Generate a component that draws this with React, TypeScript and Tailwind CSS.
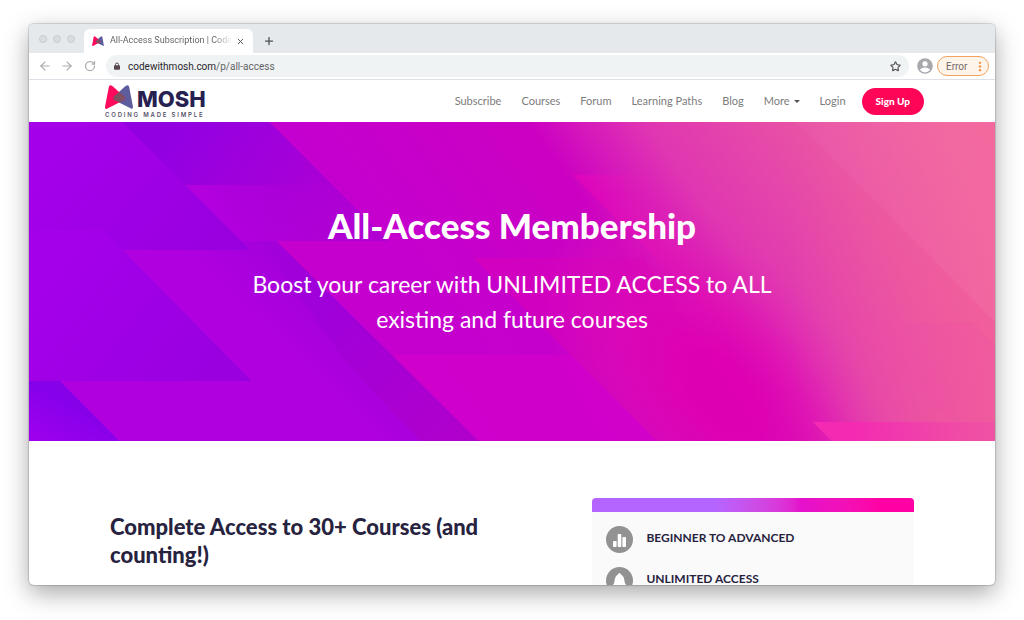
import { ReactNode } from 'react';
import {
  ArrowLeft,
  ArrowRight,
  Plus,
  RotateCw,
  Star,
  X,
} from 'lucide-react';

const navLinks = [
  { label: 'Subscribe', href: '#subscribe' },
  { label: 'Courses', href: '#courses' },
  { label: 'Forum', href: '#forum' },
  { label: 'Learning Paths', href: '#paths' },
  { label: 'Blog', href: '#blog' },
];

function LogoMark({ className }: { className?: string }) {
  return (
    <svg viewBox="0 0 28 24" className={className} aria-hidden="true">
      <path
        d="M20 1.500 Q23.500 -1 24.200 2 L28 22 Q28 24.500 26 23.500 L9 15 Q7.500 13 9 11.500 Z"
        fill="#5d5c9c"
      />
      <path
        d="M3.800 2 Q4.500 -1 8 1.500 L19 11.500 Q20.500 13.500 19 15 L2 23.700 Q0 24.500 0 22 Z"
        fill="#ff0a5c"
      />
      <path
        d="M14 7 L19 11.500 Q20.500 13.500 19 15 L14.500 17.500 L9 15 Q7.500 13 9 11.500 Z"
        fill="#7c5360"
      />
    </svg>
  );
}

function TabStrip() {
  return (
    <div className="flex h-[29px] items-end bg-[#e5e9ec]">
      <div className="flex gap-1.5 self-center pl-2.5">
        {[0, 1, 2].map((n) => (
          <span
            key={n}
            className="size-2 rounded-full border border-[#c9cccf] bg-[#dadddf]"
          />
        ))}
      </div>
      <div className="ml-[9px] flex h-6 w-[169px] items-center rounded-t-md bg-white px-2">
        <LogoMark className="h-[10px] w-3 shrink-0" />
        <span className="ml-1.5 flex-1 overflow-hidden bg-linear-to-r from-[#5a5d60] from-85% to-transparent bg-clip-text text-[9px] whitespace-nowrap text-transparent">
          All-Access Subscription | Code
        </span>
        <button type="button" aria-label="Close tab" className="ml-1">
          <X className="size-[9px] text-[#4b4e52]" strokeWidth={2.5} />
        </button>
      </div>
      <button type="button" aria-label="New tab" className="mb-1.5 ml-2.5">
        <Plus className="size-3 text-[#4b4e52]" strokeWidth={2.5} />
      </button>
    </div>
  );
}

function Toolbar() {
  return (
    <div className="flex h-[27px] items-center border-b border-[#dfe1e8] pr-1.5 pl-[9px]">
      <div className="flex items-center gap-2 text-[#a9abae]">
        <button type="button" aria-label="Back">
          <ArrowLeft className="size-3.5" strokeWidth={2} />
        </button>
        <button type="button" aria-label="Forward">
          <ArrowRight className="size-3.5" strokeWidth={2} />
        </button>
        <button type="button" aria-label="Reload" className="pl-0.5">
          <RotateCw className="size-3" strokeWidth={2.5} />
        </button>
      </div>
      <div className="ml-2.5 flex h-[22px] flex-1 items-center rounded-full bg-[#f0f3f4] pr-2 pl-2">
        <svg viewBox="0 0 8 10" className="h-2 w-1.5" aria-hidden="true">
          <rect y="4" width="8" height="6" rx="1" fill="#55464b" />
          <path
            d="M2 4.500 V3 a2 2 0 0 1 4 0 V4.500"
            fill="none"
            stroke="#55464b"
            strokeWidth="1.300"
          />
        </svg>
        <span className="ml-2 flex-1 text-[10px] text-[#5f6368]">
          <span className="text-[#26262b]">codewithmosh.com</span>/p/all-access
        </span>
        <button type="button" aria-label="Bookmark this page">
          <Star className="size-[11px] text-[#55525a]" strokeWidth={2.5} />
        </button>
      </div>
      <button type="button" aria-label="Profile" className="ml-2">
        <svg viewBox="0 0 16 16" className="size-4">
          <circle cx="8" cy="8" r="7.800" fill="#a9a9ad" />
          <circle cx="8" cy="5.800" r="2.600" fill="#fff" />
          <path d="M2.800 11.800 Q5 9.600 8 9.600 T13.200 11.800 Q11 14.400 8 14.400 T2.800 11.800 Z" fill="#fff" />
        </svg>
      </button>
      <button
        type="button"
        className="ml-1 flex h-5 w-[52px] items-center justify-between rounded-full border border-[#f0a35e] bg-[#fef4ea] pr-1.5 pl-2 text-[10px] text-[#74696b]"
      >
        Error
        <svg viewBox="0 0 4 12" className="h-[11px] w-1" fill="#f0954a" aria-hidden="true">
          <circle cx="2" cy="2" r="1.300" />
          <circle cx="2" cy="6" r="1.300" />
          <circle cx="2" cy="10" r="1.300" />
        </svg>
      </button>
    </div>
  );
}

function SiteHeader() {
  return (
    <header className="flex h-[42px] items-center justify-between pr-[71px] pl-[76px]">
      <a href="#home" className="block text-[#262150]">
        <span className="flex items-end">
          <LogoMark className="h-6 w-7" />
          <span className="ml-1 font-[Inter,sans-serif] text-[22px] leading-5 font-extrabold">
            MOSH
          </span>
        </span>
        <span className="mt-0.5 block font-[Inter,sans-serif] text-[6px] leading-[7px] font-semibold tracking-[0.3em] text-[#56536c]">
          CODING MADE SIMPLE
        </span>
      </a>
      <nav className="flex items-center gap-5 text-[11px] text-[#7c7c7c]">
        {navLinks.map((link) => (
          <a key={link.label} href={link.href}>
            {link.label}
          </a>
        ))}
        <a href="#more" className="flex items-center gap-1">
          More
          <span className="border-x-3 border-t-3 border-x-transparent border-t-[#555]" />
        </a>
        <a href="#login">Login</a>
        <a
          href="#signup"
          className="-ml-1 flex h-[27px] items-center rounded-full bg-[#ff0558] px-3.5 text-[10px] font-black text-white"
        >
          Sign Up
        </a>
      </nav>
    </header>
  );
}

function HeroBackground() {
  return (
    <svg
      viewBox="0 0 965 319"
      preserveAspectRatio="none"
      className="absolute inset-0 size-full"
      aria-hidden="true"
    >
      <defs>
        <linearGradient id="base" gradientUnits="userSpaceOnUse" x1="164" y1="-116" x2="656" y2="-464">
          <stop offset="0" stopColor="#c400d0" />
          <stop offset="0.340" stopColor="#cb00c2" />
          <stop offset="0.400" stopColor="#d414bc" />
          <stop offset="0.500" stopColor="#e036b2" />
          <stop offset="0.720" stopColor="#e854a4" />
          <stop offset="1" stopColor="#f474a2" />
        </linearGradient>
        <linearGradient id="leftA" x1="0" y1="0" x2="1" y2="0.500">
          <stop offset="0.200" stopColor="#a400ea" />
          <stop offset="1" stopColor="#9900e0" />
        </linearGradient>
        <linearGradient id="band" x1="0" y1="0" x2="1" y2="0.300">
          <stop offset="0.200" stopColor="#9200e2" />
          <stop offset="1" stopColor="#b000d2" />
        </linearGradient>
        <linearGradient id="mid" gradientUnits="userSpaceOnUse" x1="200" y1="120" x2="300" y2="70">
          <stop offset="0" stopColor="#b200de" />
          <stop offset="1" stopColor="#b000d4" stopOpacity="0.200" />
        </linearGradient>
        <linearGradient id="low" gradientUnits="userSpaceOnUse" x1="200" y1="230" x2="290" y2="140">
          <stop offset="0.300" stopColor="#b000e0" />
          <stop offset="1" stopColor="#a000da" />
        </linearGradient>
        <linearGradient id="stripe" gradientUnits="userSpaceOnUse" x1="240" y1="130" x2="430" y2="319">
          <stop offset="0" stopColor="#9c00da" stopOpacity="0.200" />
          <stop offset="0.300" stopColor="#a000da" />
          <stop offset="1" stopColor="#b000cc" />
        </linearGradient>
        <linearGradient id="corner" x1="0" y1="1" x2="0.500" y2="0.400">
          <stop offset="0" stopColor="#a000ee" />
          <stop offset="1" stopColor="#8600ea" />
        </linearGradient>
        <linearGradient id="glow" gradientUnits="userSpaceOnUse" x1="332" y1="-235" x2="395" y2="-280">
          <stop offset="0" stopColor="#e200bc" stopOpacity="0.900" />
          <stop offset="1" stopColor="#e42ab2" stopOpacity="0" />
        </linearGradient>
        <linearGradient id="salmon" gradientUnits="userSpaceOnUse" x1="760" y1="160" x2="965" y2="160">
          <stop offset="0" stopColor="#f0589c" stopOpacity="0" />
          <stop offset="1" stopColor="#f2609a" stopOpacity="0.900" />
        </linearGradient>
        <linearGradient id="warm" gradientUnits="userSpaceOnUse" x1="800" y1="60" x2="930" y2="20">
          <stop offset="0" stopColor="#ec5cb0" />
          <stop offset="1" stopColor="#f474a4" />
        </linearGradient>
        <linearGradient id="edge" gradientUnits="userSpaceOnUse" x1="444" y1="136" x2="600" y2="136">
          <stop offset="0" stopColor="#da00b8" stopOpacity="0.600" />
          <stop offset="1" stopColor="#dc00b4" stopOpacity="0.300" />
        </linearGradient>
        <radialGradient
          id="pool"
          gradientUnits="userSpaceOnUse"
          cx="0"
          cy="0"
          r="1"
          gradientTransform="translate(690 270) rotate(52) scale(230 130)"
        >
          <stop offset="0.200" stopColor="#de00b2" />
          <stop offset="0.500" stopColor="#e00cb2" stopOpacity="0.700" />
          <stop offset="1" stopColor="#e02ab2" stopOpacity="0" />
        </radialGradient>
        <linearGradient id="hot" x1="0" y1="0" x2="1" y2="0">
          <stop offset="0.200" stopColor="#f42ab2" />
          <stop offset="1" stopColor="#f04ca8" stopOpacity="0.500" />
        </linearGradient>
      </defs>
      <rect width="965" height="319" fill="url(#base)" />
      <rect width="965" height="319" fill="url(#salmon)" />
      <path d="M767 0 L965 200 V0 Z" fill="url(#warm)" opacity="0.400" />
      <path d="M543 53 H965 V319 H809 Z" fill="url(#glow)" />
      <rect width="965" height="319" fill="url(#pool)" />
      <path d="M820 200 H943 L965 222 V319 H939 Z" fill="#f04caa" opacity="0.200" />
      <path d="M783 300 H965 V319 H802 Z" fill="url(#hot)" />
      <path d="M247 119 H427 L627 319 H453 Z" fill="#c600ce" opacity="0.500" />
      <path d="M444 136 H614 L740 319 H627 Z" fill="url(#edge)" />
      <path d="M363 233 H541 L627 319 H449 Z" fill="#d400ca" opacity="0.700" />
      <path d="M0 0 H240 L359 119 H247 L449 319 H0 Z" fill="url(#low)" />
      <path d="M93 0 H240 L359 119 H210 Z" fill="url(#band)" />
      <path d="M156 63 H303 L359 119 H210 Z" fill="url(#mid)" />
      <path d="M230 119 H247 L449 319 H391 L322 247 Z" fill="url(#stripe)" />
      <path d="M0 0 H93 L221 128 H93 L74 108 H0 Z" fill="url(#leftA)" />
      <path d="M0 108 H74 L222 259 H0 Z" fill="url(#leftA)" />
      <path d="M0 259 H31 L90 319 H0 Z" fill="url(#corner)" />
    </svg>
  );
}

function Hero() {
  return (
    <section className="relative bg-[#c400cc] pt-[82px] pb-[104px] text-center text-white">
      <HeroBackground />
      <div className="relative">
        <h1 className="font-[Lato,sans-serif] text-[35px] leading-[42px] font-black">
          All-Access Membership
        </h1>
        <p className="mx-auto mt-[21px] max-w-[560px] font-[Lato,sans-serif] text-[23px] leading-[35px] font-normal">
          Boost your career with UNLIMITED ACCESS to ALL existing and future
          courses
        </p>
      </div>
    </section>
  );
}

function Feature({ icon, title }: { icon: ReactNode; title: string }) {
  return (
    <li className="flex items-center gap-[13px]">
      <svg viewBox="0 0 27 27" className="size-[27px] shrink-0" aria-hidden="true">
        <circle cx="13.500" cy="13.500" r="13.500" fill="#929292" />
        {icon}
      </svg>
      <span className="pb-1">{title}</span>
    </li>
  );
}

function Overview() {
  return (
    <section className="flex items-start justify-between pt-[57px] pr-[81px] pl-[81px]">
      <h2 className="mt-[15px] max-w-[400px] font-[Lato,sans-serif] text-[22px] leading-7 font-black text-[#27233f]">
        Complete Access to 30+ Courses (and counting!)
      </h2>
      <div className="w-2/5 overflow-hidden rounded-t bg-[#fafafa]">
        <div className="h-3.5 bg-linear-to-r from-[#b565ff] from-38% via-[#e410cc] via-65% to-[#ff00a4] to-90%" />
        <ul className="space-y-3.5 px-3.5 py-3.5 font-[Lato,sans-serif] text-xs font-bold text-[#27233f]">
          <Feature
            title="BEGINNER TO ADVANCED"
            icon={
              <g fill="#fff">
                <rect x="7" y="15" width="3.600" height="6" rx="0.800" />
                <rect x="11.700" y="8" width="3.600" height="13" rx="0.800" />
                <rect x="16.400" y="11" width="3.600" height="10" rx="0.800" />
              </g>
            }
          />
          <Feature
            title="UNLIMITED ACCESS"
            icon={
              <path
                d="M13.500 6 Q14.800 6 15 7.500 Q18 9 18.300 13 Q18.500 16 20 18 H7 Q8.500 16 8.700 13 Q9 9 12 7.500 Q12.200 6 13.500 6 Z M11.500 19.500 H15.500 Q15 21.500 13.500 21.500 T11.500 19.500 Z"
                fill="#fff"
              />
            }
          />
        </ul>
      </div>
    </section>
  );
}

export default function App() {
  return (
    <div className="h-screen overflow-hidden bg-white px-[29px] pt-6 pb-[35px] font-[Roboto,sans-serif]">
      <div className="flex h-full flex-col overflow-hidden rounded-[5px] bg-white shadow-[0_0_1px_1px_rgba(0,0,0,0.15),0_8px_24px_rgba(0,0,0,0.35)]">
        <TabStrip />
        <Toolbar />
        <main className="min-h-0 flex-1 overflow-hidden font-[Lato,sans-serif]">
          <SiteHeader />
          <Hero />
          <Overview />
        </main>
      </div>
    </div>
  );
}
